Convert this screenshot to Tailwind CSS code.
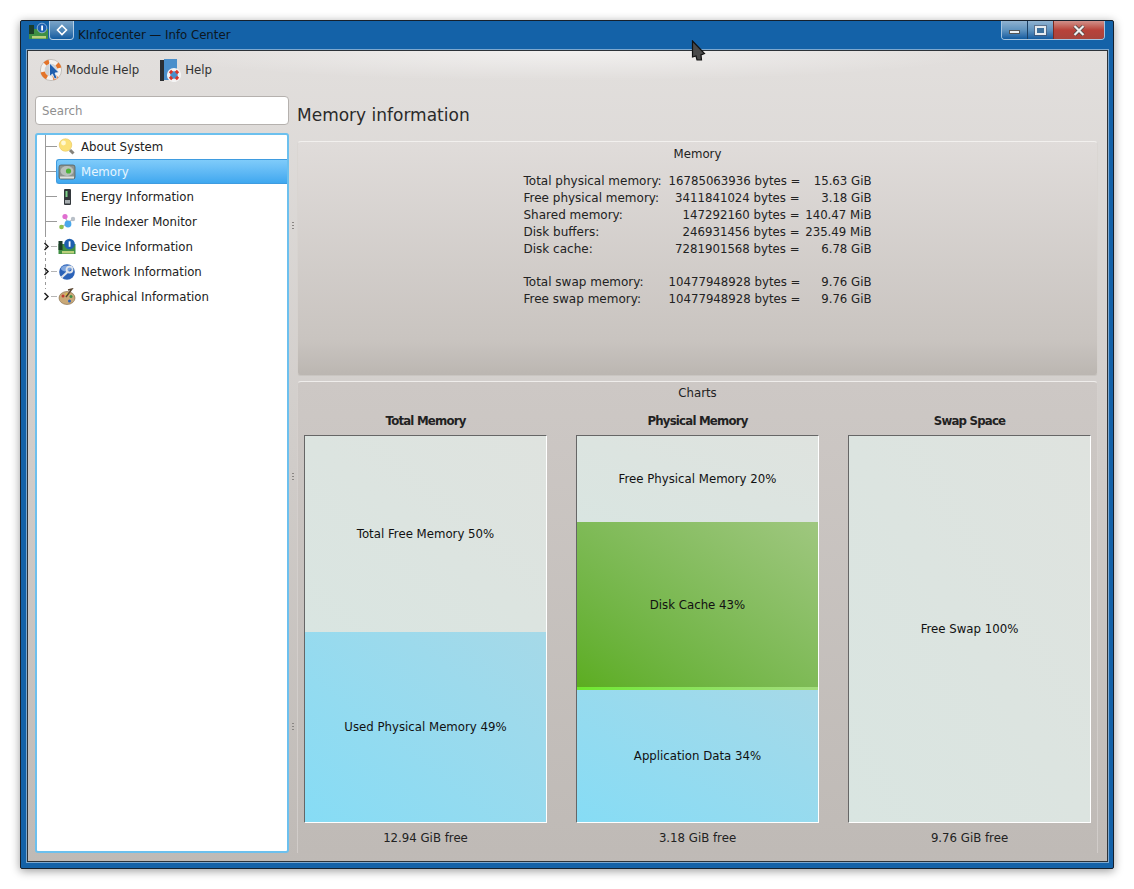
<!DOCTYPE html>
<html lang="en">
<head>
    <meta charset="UTF-8">
    <title>KInfocenter — Info Center</title>
    <script src="https://cdn.jsdelivr.net/npm/@tailwindcss/browser@4"></script>
</head>
<body class="bg-white w-[1134px] h-[889px] overflow-hidden font-['DejaVu_Sans',sans-serif] text-[11.75px] text-[#222]">
    <!-- Window -->
    <div class="relative mt-[20px] ml-[20px] w-[1094px] h-[849px] bg-[#1462a8] border border-[#16202c] rounded-[2px] shadow-[0_2px_10px_rgba(0,0,0,0.4)] flex flex-col">
        <!-- Title bar -->
        <div class="h-[29px] flex items-start pl-[7px] pr-[8px] shrink-0">
            <svg class="w-[21px] h-[20px] mt-[1px]" viewBox="0 0 21 20">
                <rect x="1" y="7" width="19" height="10" fill="#3f8f43"/>
                <rect x="1" y="3" width="5" height="9" fill="#1c3d2a"/>
                <rect x="4" y="14" width="14" height="2.500" fill="#b9cf7a"/>
                <circle cx="14" cy="6" r="4.800" fill="#1d5fb0" stroke="#cfe0f2" stroke-width="0.600"/>
                <rect x="13.200" y="3.500" width="1.800" height="5" fill="#fff"/>
            </svg>
            <div class="w-[25px] h-[19px] flex items-center justify-center border border-t-0 border-[#c8dcee]/80 rounded-b-[4px] bg-gradient-to-b from-[#7aa4c8] via-[#4f86b6] to-[#0f5ba0]">
                <svg class="w-[12px] h-[12px]" viewBox="0 0 12 12"><path d="M6 1.500 10.500 6 6 10.500 1.500 6Z" fill="none" stroke="#fff" stroke-width="1.600"/></svg>
            </div>
            <span class="ml-[4px] mt-[6px] leading-[16px] text-[#0d1620]">KInfocenter — Info Center</span>
            <!-- Window buttons -->
            <div class="ml-auto flex h-[19px] border border-t-0 border-[#c8dcee]/80 rounded-b-[4px] overflow-hidden">
                <div class="w-[26px] flex items-center justify-center border-r border-[#1b3f63] bg-gradient-to-b from-[#8fb2d0] via-[#5f93bf] to-[#0f5ba0]">
                    <div class="w-[11px] h-[4px] mt-[4px] bg-[#eef2f5] border border-[#555]"></div>
                </div>
                <div class="w-[26px] flex items-center justify-center border-r border-[#7a2a20] bg-gradient-to-b from-[#8fb2d0] via-[#5f93bf] to-[#0f5ba0]">
                    <div class="w-[11px] h-[9px] border-2 border-[#e6ebef] bg-[#3c6f9c] outline outline-[#445]/50"></div>
                </div>
                <div class="w-[50px] flex items-center justify-center bg-gradient-to-b from-[#d0908a] via-[#b8423a] to-[#a8443c]">
                    <svg class="w-[12px] h-[11px]" viewBox="0 0 12 11"><path d="M1.500 1 10.500 10M10.500 1 1.500 10" stroke="#444" stroke-width="3.600"/><path d="M1.500 1 10.500 10M10.500 1 1.500 10" stroke="#f0f0f0" stroke-width="2.200"/></svg>
                </div>
            </div>
        </div>

        <!-- Client area -->
        <div class="mx-[6px] w-[1081px] h-[812px] border border-[#2c3238] outline outline-[#a9c6e0]/70 bg-gradient-to-b from-[#e2dfdd] to-[#bfbab6] flex flex-col">
            <!-- Toolbar -->
            <div class="h-[41px] flex items-center pl-[12px] pb-[3px] shrink-0 bg-[radial-gradient(ellipse_420px_30px_at_50%_0%,rgba(255,255,255,0.55),transparent)]">
                <svg class="w-[22px] h-[22px]" viewBox="0 0 22 22">
                    <circle cx="11" cy="11" r="8.500" fill="#cfd2d4" stroke="#f3f1ee" stroke-width="4.400"/>
                    <circle cx="11" cy="11" r="10.600" fill="none" stroke="#a8a39e" stroke-width="0.600"/>
                    <path d="M5 5A8.500 8.500 0 0 1 9 2.700M17 5A8.500 8.500 0 0 1 19.300 9M2.700 13A8.500 8.500 0 0 0 7 18.500M17 17A8.500 8.500 0 0 1 13 19.300" fill="none" stroke="#e3742a" stroke-width="4.200"/>
                    <path d="M9.500 4 9.500 17.500 12.500 15 14.500 20 17 19 15 14 19 13.500Z" fill="#1f5fae" stroke="#fff" stroke-width="0.700"/>
                </svg>
                <span class="ml-[4px] pt-[2px] text-[#333]">Module Help</span>
                <svg class="ml-[21px] w-[21px] h-[23px]" viewBox="0 0 21 23">
                    <rect x="0" y="1" width="4" height="21" fill="#2b2f33"/>
                    <rect x="4" y="0" width="13" height="21" fill="#4a8fcb"/>
                    <circle cx="14" cy="16" r="5.400" fill="#4a8fcb" stroke="#f4f4f4" stroke-width="3.400"/>
                    <path d="M10 12 12 14M18 12 16 14M10 20 12 18M18 20 16 18" stroke="#d8362a" stroke-width="3.200"/>
                </svg>
                <span class="ml-[4px] pt-[2px] text-[#333]">Help</span>
            </div>

            <div class="flex-1 flex pl-[7px] pr-[8px] min-h-0">
                <!-- Left column -->
                <div class="w-[254px] flex flex-col shrink-0">
                    <div class="h-[29px] mt-[4px] bg-white border border-[#b5b1ae] rounded-[4px] pl-[6px] pt-[2px] flex items-center text-[#8f8f8f] shrink-0">Search</div>
                    <!-- Tree -->
                    <div class="relative mt-[8px] h-[720px] bg-white border-2 border-[#6cc0ee] rounded-[3px] flex flex-col">
                        <div class="absolute left-[8px] top-0 w-px h-[99px] bg-[#9a9a9a]"></div>
                        <div class="absolute left-[8px] top-[99px] w-px h-[55px] bg-[linear-gradient(#9a9a9a_50%,transparent_50%)] bg-[length:1px_6px]"></div>

                        <div class="h-[25px] -mt-[1px] flex items-center pl-[9px] shrink-0">
                            <div class="w-[11px] h-px bg-[#9a9a9a]"></div>
                            <svg class="ml-[1px] w-[18px] h-[18px]" viewBox="0 0 18 18">
                                <circle cx="7.500" cy="7" r="6.300" fill="#fbe177" stroke="#e2bd55" stroke-width="0.500"/>
                                <circle cx="5.500" cy="5" r="2.400" fill="#fff8d0"/>
                                <path d="M12 12 15.500 15.500" stroke="#85827a" stroke-width="3"/>
                            </svg>
                            <span class="ml-[5px] pt-[2px]">About System</span>
                        </div>
                        <div class="h-[25px] flex items-center pl-[9px] shrink-0">
                            <div class="w-[10px] h-px bg-[#9a9a9a]"></div>
                            <div class="flex-1 h-[25px] flex items-center rounded-l-[3px] bg-gradient-to-b from-[#7fcbfa] to-[#3fa8ef] border border-[#3f9ce0] border-r-0">
                                <svg class="ml-[1px] w-[18px] h-[18px]" viewBox="0 0 18 18">
                                    <rect x="1" y="2" width="16" height="14" rx="2" fill="#8d9591" stroke="#4e5452" stroke-width="0.700"/>
                                    <ellipse cx="9" cy="8" rx="6.500" ry="5" fill="#b9c0bc"/>
                                    <circle cx="10.500" cy="8" r="2.600" fill="#4fb33a"/>
                                    <rect x="2" y="13.500" width="14" height="2" fill="#dfe3e0"/>
                                </svg>
                                <span class="ml-[5px] pt-[2px] text-[#e6f6ff]">Memory</span>
                            </div>
                        </div>
                        <div class="h-[25px] flex items-center pl-[9px] shrink-0">
                            <div class="w-[11px] h-px bg-[#9a9a9a]"></div>
                            <svg class="ml-[1px] w-[18px] h-[18px]" viewBox="0 0 18 18">
                                <rect x="6" y="1" width="7" height="16" rx="1" fill="#33383c"/>
                                <rect x="7.500" y="3" width="2" height="6" fill="#7fd08a"/>
                                <rect x="7" y="12" width="5" height="3.500" fill="#a8aeb0"/>
                            </svg>
                            <span class="ml-[5px] pt-[2px]">Energy Information</span>
                        </div>
                        <div class="h-[25px] flex items-center pl-[9px] shrink-0">
                            <div class="w-[11px] h-px bg-[#9a9a9a]"></div>
                            <svg class="ml-[1px] w-[18px] h-[18px]" viewBox="0 0 18 18">
                                <path d="M7 4 10 10 3.500 14M10 10 15 6" stroke="#b4bcc4" stroke-width="1.400" fill="none"/>
                                <circle cx="7" cy="3.500" r="2.600" fill="#e06fd0"/>
                                <circle cx="15" cy="6" r="2.200" fill="#b9c0c8"/>
                                <circle cx="10" cy="11" r="3.400" fill="#4aa8ec"/>
                                <circle cx="3.500" cy="14" r="2.300" fill="#8ec04e"/>
                            </svg>
                            <span class="ml-[5px] pt-[2px]">File Indexer Monitor</span>
                        </div>
                        <div class="h-[25px] flex items-center pl-[9px] shrink-0 relative">
                            <svg class="absolute left-[6px] w-[7px] h-[9px]" viewBox="0 0 7 9"><path d="M1.500 1 5 4.500 1.500 8" fill="none" stroke="#222" stroke-width="1.500"/></svg>
                            <div class="ml-[5px] w-[6px] h-px bg-[#b5b5b5]"></div>
                            <svg class="ml-[1px] w-[18px] h-[18px]" viewBox="0 0 18 18">
                                <rect x="0.500" y="6" width="17" height="10" fill="#3f8f43"/>
                                <rect x="0.500" y="3" width="4" height="9" fill="#1c3d2a"/>
                                <rect x="4" y="13" width="12" height="2.500" fill="#b9cf7a"/>
                                <circle cx="11.500" cy="6" r="5.300" fill="#1d5fb0"/>
                                <rect x="10.700" y="3.300" width="1.800" height="5.500" fill="#fff"/>
                            </svg>
                            <span class="ml-[5px] pt-[2px]">Device Information</span>
                        </div>
                        <div class="h-[25px] flex items-center pl-[9px] shrink-0 relative">
                            <svg class="absolute left-[6px] w-[7px] h-[9px]" viewBox="0 0 7 9"><path d="M1.500 1 5 4.500 1.500 8" fill="none" stroke="#222" stroke-width="1.500"/></svg>
                            <div class="ml-[5px] w-[6px] h-px bg-[#b5b5b5]"></div>
                            <svg class="ml-[1px] w-[18px] h-[18px]" viewBox="0 0 18 18">
                                <circle cx="9" cy="9" r="7.800" fill="#2b62b8"/>
                                <ellipse cx="8" cy="5.500" rx="5" ry="3" fill="#7fa6de"/>
                                <path d="M3.500 14.500 10 8.500" stroke="#dfe4ea" stroke-width="2.200"/>
                                <circle cx="11.500" cy="6.500" r="3" fill="none" stroke="#dfe4ea" stroke-width="1.800"/>
                            </svg>
                            <span class="ml-[5px] pt-[2px]">Network Information</span>
                        </div>
                        <div class="h-[25px] flex items-center pl-[9px] shrink-0 relative">
                            <svg class="absolute left-[6px] w-[7px] h-[9px]" viewBox="0 0 7 9"><path d="M1.500 1 5 4.500 1.500 8" fill="none" stroke="#222" stroke-width="1.500"/></svg>
                            <div class="ml-[5px] w-[6px] h-px bg-[#b5b5b5]"></div>
                            <svg class="ml-[1px] w-[18px] h-[18px]" viewBox="0 0 18 18">
                                <ellipse cx="9" cy="10" rx="8" ry="6.500" fill="#c9a877" stroke="#7a6140" stroke-width="0.600"/>
                                <circle cx="5" cy="8" r="1.500" fill="#c43a2e"/>
                                <circle cx="9" cy="6.500" r="1.500" fill="#e2c53a"/>
                                <circle cx="13" cy="8.500" r="1.500" fill="#3f8f43"/>
                                <circle cx="11.500" cy="13" r="1.500" fill="#2b62b8"/>
                                <path d="M10 2 14 1 8 9" stroke="#5a4630" stroke-width="1.400" fill="none"/>
                            </svg>
                            <span class="ml-[5px] pt-[2px]">Graphical Information</span>
                        </div>
                    </div>
                </div>

                <!-- Right column -->
                <div class="ml-[8px] w-[801px] flex flex-col shrink-0">
                    <h2 class="h-[49px] pt-[11px] text-[17px] leading-[24px] font-normal text-[#2a2a2a] shrink-0">Memory information</h2>

                    <!-- Memory group -->
                    <div class="h-[235px] shrink-0 rounded-[4px] border border-t-[#f2f0ee] border-x-[#d8d4d1]/80 border-b-[#c9c5c1] bg-gradient-to-b from-[#e0dcda] via-[#c9c4c0] via-85% to-[#bbb6b1] flex flex-col items-center">
                        <div class="mt-[4px] leading-[16px]">Memory</div>
                        <div class="mt-[11px] w-[348px] grid grid-cols-[145px_131px_72px] leading-[17px] whitespace-pre">
                            <span class="text-[12px]">Total physical memory:</span><span class="text-right">16785063936 bytes =</span><span class="text-right">15.63 GiB</span>
                            <span class="text-[12px]">Free physical memory:</span><span class="text-right">3411841024 bytes =</span><span class="text-right">3.18 GiB</span>
                            <span class="text-[12px]">Shared memory:</span><span class="text-right">147292160 bytes =</span><span class="text-right">140.47 MiB</span>
                            <span class="text-[12px]">Disk buffers:</span><span class="text-right">246931456 bytes =</span><span class="text-right">235.49 MiB</span>
                            <span class="text-[12px]">Disk cache:</span><span class="text-right">7281901568 bytes =</span><span class="text-right">6.78 GiB</span>
                            <span class="col-span-3 h-[16px]"></span>
                            <span class="text-[12px]">Total swap memory:</span><span class="text-right">10477948928 bytes =</span><span class="text-right">9.76 GiB</span>
                            <span class="text-[12px]">Free swap memory:</span><span class="text-right">10477948928 bytes =</span><span class="text-right">9.76 GiB</span>
                        </div>
                    </div>

                    <!-- Charts group -->
                    <div class="mt-[5px] h-[472px] shrink-0 rounded-t-[4px] border-t border-x border-t-[#efedeb] border-x-[#d8d4d1]/70 bg-gradient-to-b from-[#cdc8c5] to-[#bfbab6] flex flex-col">
                        <div class="mt-[3px] leading-[16px] text-center">Charts</div>
                        <div class="mt-[12px] flex justify-between px-[6px]">
                            <!-- Total memory -->
                            <div class="w-[243px] flex flex-col">
                                <div class="h-[16px] leading-[16px] text-center font-bold mb-[6px] tracking-[-0.8px]">Total Memory</div>
                                <div class="h-[388px] flex flex-col border-t border-l border-t-[#666] border-l-[#666] border-r border-b border-r-white border-b-white text-[#111]">
                                    <div class="h-[196px] pt-[2px] flex items-center justify-center bg-gradient-to-tr from-[#d9e5e1] to-[#dfe3df]">Total Free Memory 50%</div>
                                    <div class="flex-1 pt-[2px] flex items-center justify-center bg-gradient-to-tr from-[#86dcf5] to-[#a6d9e8]">Used Physical Memory 49%</div>
                                </div>
                                <div class="mt-[7px] leading-[16px] text-center">12.94 GiB free</div>
                            </div>
                            <!-- Physical memory -->
                            <div class="w-[243px] flex flex-col">
                                <div class="h-[16px] leading-[16px] text-center font-bold mb-[6px] tracking-[-0.8px]">Physical Memory</div>
                                <div class="h-[388px] flex flex-col border-t border-l border-t-[#666] border-l-[#666] border-r border-b border-r-white border-b-white text-[#111]">
                                    <div class="h-[86px] pt-[2px] flex items-center justify-center bg-gradient-to-tr from-[#d9e5e1] to-[#dfe3df]">Free Physical Memory 20%</div>
                                    <div class="h-[165px] pt-[2px] flex items-center justify-center bg-gradient-to-tr from-[#5cad1f] to-[#9fc77f]">Disk Cache 43%</div>
                                    <div class="h-[3px] bg-gradient-to-r from-[#6ee82e] to-[#a2dc7c]"></div>
                                    <div class="flex-1 pt-[2px] flex items-center justify-center bg-gradient-to-tr from-[#86dcf5] to-[#a6d9e8]">Application Data 34%</div>
                                </div>
                                <div class="mt-[7px] leading-[16px] text-center">3.18 GiB free</div>
                            </div>
                            <!-- Swap -->
                            <div class="w-[243px] flex flex-col">
                                <div class="h-[16px] leading-[16px] text-center font-bold mb-[6px] tracking-[-0.8px]">Swap Space</div>
                                <div class="h-[388px] pt-[2px] flex items-center justify-center border-t border-l border-t-[#666] border-l-[#666] border-r border-b border-r-white border-b-white text-[#111] bg-gradient-to-tr from-[#d9e5e1] to-[#dfe3df]">Free Swap 100%</div>
                                <div class="mt-[7px] leading-[16px] text-center">9.76 GiB free</div>
                            </div>
                        </div>
                    </div>
                </div>
            </div>
        </div>

        <!-- Splitter handles -->
        <div class="absolute left-[271px] top-[201px] w-[2px] h-[9px] bg-[linear-gradient(#8a8683_50%,transparent_50%)] bg-[length:2px_3px]"></div>
        <div class="absolute left-[271px] top-[452px] w-[2px] h-[9px] bg-[linear-gradient(#8a8683_50%,transparent_50%)] bg-[length:2px_3px]"></div>
        <div class="absolute left-[271px] top-[702px] w-[2px] h-[9px] bg-[linear-gradient(#8a8683_50%,transparent_50%)] bg-[length:2px_3px]"></div>

        <!-- Mouse pointer -->
        <svg class="absolute left-[670px] top-[19px] w-[15px] h-[22px]" viewBox="0 0 15 22">
            <path d="M1.500 1 13.500 13.500 10 15 10.500 20 6 20 5 16 1.500 17Z" fill="#4a4a4a" stroke="#111" stroke-width="1.200"/>
        </svg>
    </div>
</body>
</html>
